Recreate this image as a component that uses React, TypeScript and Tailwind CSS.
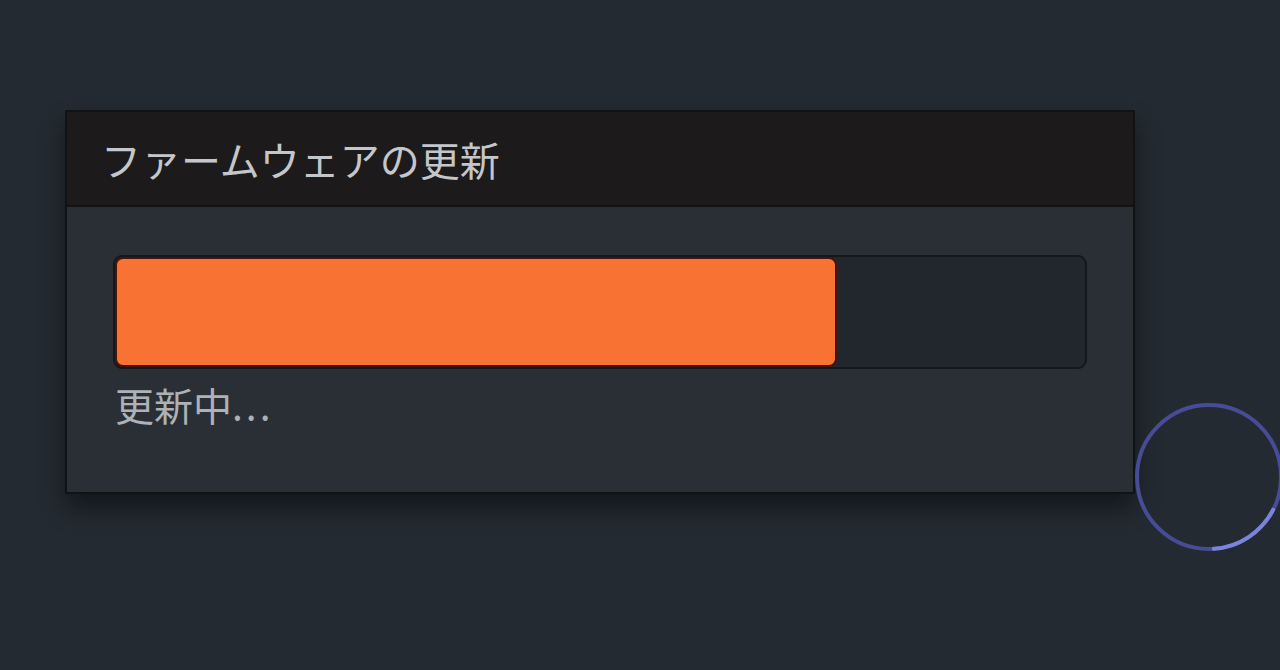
const progress = 74.4;

function Spinner() {
  // ring on the right edge, partly cut off by the window
  return (
    <svg
      className="absolute left-[1132px] top-[400px]"
      width="154"
      height="154"
      viewBox="0 0 154 154"
    >
      <circle cx="77" cy="77" r="72" fill="none" stroke="#464c96" strokeWidth={4} />
      <circle
        cx="77"
        cy="77"
        r="72"
        fill="none"
        stroke="#7c83dc"
        strokeWidth={4}
        strokeLinecap="round"
        strokeDasharray="74 400"
        strokeDashoffset="-34"
      />
    </svg>
  );
}

export default function App() {
  return (
    <div
      className="relative h-[670px] w-[1280px] overflow-hidden bg-[#232a31] pl-[65px] pt-[110px]"
      style={{ fontFamily: '"Noto Sans CJK JP", "Noto Sans", sans-serif' }}
    >
      <div className="w-[1070px] border-2 border-[#101214] bg-[#2a2f35] shadow-[0_14px_24px_rgba(0,0,0,0.45)]">
        <div className="flex h-[95px] items-center border-b-2 border-[#121314] bg-[#1c1a1a] pl-[34px]">
          <span className="text-[40px] leading-none text-[#c3c7cb]">ファームウェアの更新</span>
        </div>
        <div className="px-[46px] pb-[68px] pt-[48px]">
          <div className="h-[114px] rounded-[9px] border-2 border-[#15181b] bg-[#22272d]">
            <div
              className="h-full rounded-[8px] border-2 border-[#4a1309] bg-[#f87234]"
              style={{ width: `${progress}%` }}
            />
          </div>
          <div className="mt-[16px] flex items-baseline pl-[2px] text-[39px] leading-none text-[#adb2b7]">
            更新中<span className="tracking-[3px]">...</span>
          </div>
        </div>
      </div>
      <Spinner />
    </div>
  );
}
